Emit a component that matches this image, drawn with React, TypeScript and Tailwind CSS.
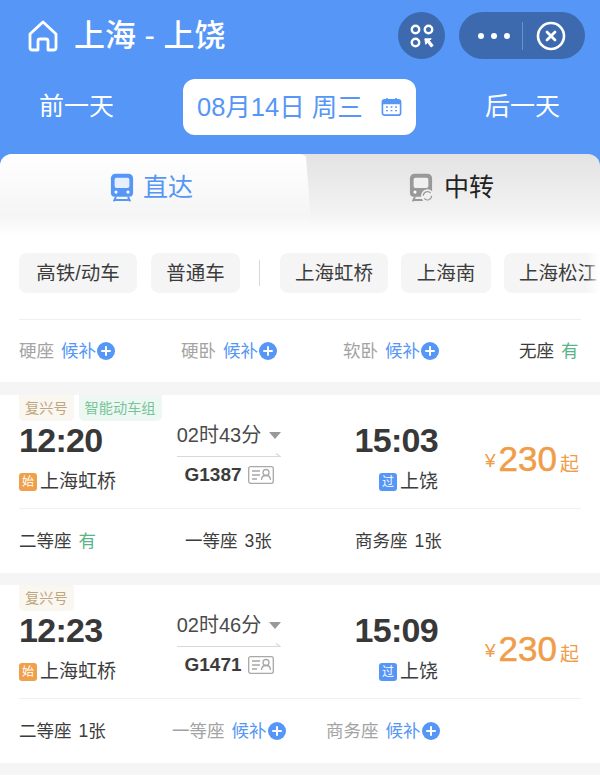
function Plus() {
  return (
    <svg width="18" height="18" viewBox="0 0 18 18" className="shrink-0 ml-px">
      <circle cx="9" cy="9" r="9" fill="#5596f6" />
      <path d="M9 5v8M5 9h8" stroke="#fff" strokeWidth="2" strokeLinecap="round" />
    </svg>
  )
}

function TrainIcon({ color, transfer }: { color: string; transfer?: boolean }) {
  return (
    <svg width="24" height="31" viewBox="0 0 26 32">
      <path d="M6 1h14a5 5 0 015 5v16a4 4 0 01-4 4H5a4 4 0 01-4-4V6a5 5 0 015-5z" fill={color} />
      <path d="M7 5.500h12a2 2 0 012 2v7a2 2 0 01-2 2H7a2 2 0 01-2-2v-7a2 2 0 012-2z" fill="#fff" opacity="0.85" />
      <circle cx="6.500" cy="21" r="1.700" fill="#fff" />
      <circle cx="19.500" cy="21" r="1.700" fill="#fff" />
      <path d="M6.500 26l-2.500 5M19.500 26l2.500 5M5 29.500h16" stroke={color} strokeWidth="2" fill="none" />
      {transfer && (
        <>
          <circle cx="20" cy="25" r="7" fill="#f0f0f0" />
          <path d="M15.500 25a4.500 4.500 0 018-2.800M24.500 25a4.500 4.500 0 01-8 2.800" stroke="#999" strokeWidth="1.300" fill="none" />
        </>
      )}
    </svg>
  )
}

function Seat({ name, value, kind, className = '' }: { name: string; value: string; kind: 'wait' | 'have' | 'count'; className?: string }) {
  if (kind === 'wait') {
    return (
      <div className={`flex items-center ${className}`}>
        <span className="text-[#a3a3a3]">{name}</span>
        <span className="ml-[7px] text-[#5596f6]">{value}</span>
        <Plus />
      </div>
    )
  }
  return (
    <div className={`flex items-center ${className}`}>
      <span className="text-[#3c3c3c]">{name}</span>
      <span className={`ml-[7px] ${kind === 'have' ? 'text-[#5ab387]' : 'text-[#3c3c3c]'}`}>{value}</span>
    </div>
  )
}

function IdCard() {
  return (
    <svg width="26" height="18" viewBox="0 0 26 18" fill="none" stroke="#a8a8a8">
      <rect x="0.700" y="0.700" width="24.600" height="16.600" rx="2" strokeWidth="1.300" />
      <path d="M4 5h8M4 9h8M4 13h5" strokeWidth="1.300" />
      <circle cx="18" cy="6.500" r="3" strokeWidth="1.300" />
      <path d="M13.500 14c0-6 9-6 9 0" strokeWidth="1.300" />
    </svg>
  )
}

type Train = {
  tags: string[]
  dep: string
  arr: string
  dur: string
  no: string
  seats: React.ReactNode
}

function TrainCard({ t }: { t: Train }) {
  return (
    <div className="bg-white h-[178px] px-[19px] flex flex-col">
      <div className="flex gap-[5px] h-[26px]">
        {t.tags.map((tag, i) => (
          <span
            key={tag}
            className={`h-[26px] px-[6px] rounded-b-[5px] text-[14.200px] leading-[26px] ${i === 0 ? 'bg-[#faf6f0] text-[#bfa67e]' : 'bg-[#eef8f2] text-[#78c49a]'}`}
          >
            {tag}
          </span>
        ))}
      </div>
      <div className="flex h-[88px] border-b border-[#f0f0f0]">
        <div className="w-[131px] shrink-0">
          <div className="text-[34px] leading-[38px] font-bold text-[#383838] tracking-[-0.7px]">{t.dep}</div>
          <div className="mt-[10px] flex items-center gap-[3px] text-[19px] leading-[26px] text-[#3c3c3c]">
            <span className="w-[18px] h-[18px] rounded-[3px] bg-[#f0a04b] text-white text-[12px] leading-[18px] text-center">始</span>
            上海虹桥
          </div>
        </div>
        <div className="w-[104px] shrink-0 ml-[27px] flex flex-col items-center">
          <div className="flex items-center gap-[8px] text-[20px] leading-[24px] text-[#4a4a4a] mt-[2px] whitespace-nowrap">
            {t.dur}
            <span className="w-0 h-0 border-x-[6px] border-x-transparent border-t-[7px] border-t-[#999]" />
          </div>
          <svg width="104" height="5" viewBox="0 0 104 5" className="mt-[6px]">
            <path d="M0 3.500h103l-4-3" stroke="#d8d8d8" strokeWidth="1.200" fill="none" />
          </svg>
          <div className="mt-[5px] flex items-center gap-[6px] text-[19px] leading-[24px] font-bold text-[#3c3c3c] whitespace-nowrap">
            {t.no}
            <IdCard />
          </div>
        </div>
        <div className="w-[157px] shrink-0 flex flex-col items-end">
          <div className="text-[34px] leading-[38px] font-bold text-[#383838] tracking-[-0.7px]">{t.arr}</div>
          <div className="mt-[10px] flex items-center gap-[3px] text-[19px] leading-[26px] text-[#3c3c3c]">
            <span className="w-[18px] h-[18px] rounded-[3px] bg-[#5596f6] text-white text-[12px] leading-[18px] text-center">过</span>
            上饶
          </div>
        </div>
        <div className="flex-1 flex items-start justify-end text-[#f09c48] mt-[18px] pr-[2px]">
          <span className="text-[19px] leading-[30px] mt-[7px] mr-[3px]">¥</span>
          <span className="text-[35px] leading-[40px] font-normal [-webkit-text-stroke:0.5px_#f09c48]">230</span>
          <span className="text-[19px] leading-[24px] ml-[3px] mt-[14px]">起</span>
        </div>
      </div>
      <div className="flex-1 text-[17.500px] flex items-center">{t.seats}</div>
    </div>
  )
}

const trains: Train[] = [
  {
    tags: ['复兴号', '智能动车组'],
    dep: '12:20',
    arr: '15:03',
    dur: '02时43分',
    no: 'G1387',
    seats: (
      <div className="w-full flex">
        <Seat name="二等座" value="有" kind="have" className="w-[166px]" />
        <Seat name="一等座" value="3张" kind="count" className="w-[170px]" />
        <Seat name="商务座" value="1张" kind="count" />
      </div>
    ),
  },
  {
    tags: ['复兴号'],
    dep: '12:23',
    arr: '15:09',
    dur: '02时46分',
    no: 'G1471',
    seats: (
      <div className="w-full flex">
        <Seat name="二等座" value="1张" kind="count" className="w-[153px]" />
        <Seat name="一等座" value="候补" kind="wait" className="w-[154px]" />
        <Seat name="商务座" value="候补" kind="wait" />
      </div>
    ),
  },
]

export default function App() {
  return (
    <div className="w-[600px] h-[783px] overflow-hidden bg-white font-['Liberation_Sans','Noto_Sans_CJK_SC',sans-serif]">
      <div className="h-[154px] bg-[#5596f6] text-white">
        <div className="h-[79px] pl-[28px] pr-[15px] pt-[12px] flex items-start">
          <svg width="30" height="32" viewBox="0 0 30 32" fill="none" stroke="#fff" strokeWidth="2.800" strokeLinejoin="round" className="mt-[8px]">
            <path d="M2 14L15 2l13 12v13.500a2.500 2.500 0 01-2.500 2.500H20v-9a2 2 0 00-2-2h-6a2 2 0 00-2 2v9H4.500A2.500 2.500 0 012 27.500z" />
          </svg>
          <div className="ml-[16px] mt-[5px] text-[31px] leading-[38px] font-medium whitespace-nowrap">上海 - 上饶</div>
          <div className="ml-auto w-[47px] h-[47px] rounded-full bg-[#3d6aae] flex items-center justify-center">
            <svg width="26" height="26" viewBox="0 0 28 28" fill="none" stroke="#fff" strokeWidth="2.600">
              <circle cx="7" cy="7" r="4" />
              <circle cx="21" cy="7" r="4" />
              <circle cx="7" cy="21" r="4" />
              <path d="M17 17h7l-2 2 4 5-2 2-4-5-2 2z" fill="#fff" strokeWidth="1" />
            </svg>
          </div>
          <div className="ml-[14px] w-[126px] h-[47px] rounded-full bg-[#3d6aae] flex items-center">
            <div className="w-[51px] flex justify-end gap-[7px]">
              <span className="w-[6px] h-[6px] rounded-full bg-white" />
              <span className="w-[6px] h-[6px] rounded-full bg-white" />
              <span className="w-[6px] h-[6px] rounded-full bg-white" />
            </div>
            <div className="ml-[12px] w-px h-[28px] bg-[#6d92c9]" />
            <svg width="30" height="30" viewBox="0 0 30 30" fill="none" stroke="#fff" className="ml-[13px]">
              <circle cx="15" cy="15" r="13" strokeWidth="2.600" />
              <path d="M11 11l8 8M19 11l-8 8" strokeWidth="2.800" strokeLinecap="round" />
            </svg>
          </div>
        </div>
        <div className="flex items-center h-[56px] text-[25px]">
          <div className="w-[183px] pl-[39px]">前一天</div>
          <div className="w-[233px] h-[56px] rounded-[12px] bg-white text-[#5596f6] flex items-center pl-[14px] text-[25.500px] whitespace-nowrap">
            <span className="whitespace-pre">08月14日 周三</span>
            <svg width="21" height="20" viewBox="0 0 22 22" className="ml-[18px]">
              <rect x="1" y="3" width="20" height="17" rx="2.500" fill="none" stroke="#5596f6" strokeWidth="1.800" />
              <path d="M1 5.500a2.500 2.500 0 012.500-2.500h15A2.500 2.500 0 0121 5.500V8H1z" fill="#5596f6" />
              <path d="M6 1v4M16 1v4" stroke="#5596f6" strokeWidth="1.800" />
              <path d="M5 11h2M10 11h2M15 11h2M5 15h2M10 15h2M15 15h2" stroke="#5596f6" strokeWidth="1.600" />
            </svg>
          </div>
          <div className="ml-[69px]">后一天</div>
        </div>
      </div>

      <div className="h-[81px] bg-[#5596f6]">
        <div className="h-full flex rounded-t-[12px] overflow-hidden bg-gradient-to-b from-[#e3e3e3] via-[#f3f3f3] via-75% to-white">
          <div className="w-[312px] rounded-tr-[14px] [clip-path:polygon(0_0,98%_0,100%_100%,0_100%)] bg-gradient-to-b from-white via-[#f5f5f5] via-75% to-white flex items-start pl-[110px] pt-[18px] gap-[9px] text-[#5596f6] text-[25px] leading-[30px]">
            <TrainIcon color="#5596f6" />
            直达
          </div>
          <div className="flex-1 flex items-start pl-[97px] pt-[18px] gap-[11px] text-[#222] text-[25px] leading-[30px]">
            <TrainIcon color="#999" transfer />
            中转
          </div>
        </div>
      </div>

      <div className="relative flex items-center h-[40px] mt-[18px] pl-[19px] text-[19.500px] text-[#3c3c3c] whitespace-nowrap">
        <span className="shrink-0 w-[118px] h-[40px] leading-[40px] text-center rounded-[8px] bg-[#f5f5f5]">高铁/动车</span>
        <span className="shrink-0 ml-[14px] w-[89px] h-[40px] leading-[40px] text-center rounded-[8px] bg-[#f5f5f5]">普通车</span>
        <span className="shrink-0 ml-[19px] w-px h-[26px] bg-[#d8d8d8]" />
        <span className="shrink-0 ml-[20px] w-[108px] h-[40px] leading-[40px] text-center rounded-[8px] bg-[#f5f5f5]">上海虹桥</span>
        <span className="shrink-0 ml-[13px] w-[90px] h-[40px] leading-[40px] text-center rounded-[8px] bg-[#f5f5f5]">上海南</span>
        <span className="shrink-0 ml-[13px] w-[108px] h-[40px] leading-[40px] text-center rounded-[8px] bg-[#f5f5f5]">上海松江</span>
        <span className="absolute right-0 top-0 w-[14px] h-[40px] bg-gradient-to-r from-transparent to-white" />
      </div>

      <div className="mx-[19px] mt-[26px] border-t border-[#f0f0f0] h-[63px] flex items-center text-[17.500px]">
        <Seat name="硬座" value="候补" kind="wait" className="w-[162px]" />
        <Seat name="硬卧" value="候补" kind="wait" className="w-[162px]" />
        <Seat name="软卧" value="候补" kind="wait" className="w-[176px]" />
        <Seat name="无座" value="有" kind="have" />
      </div>

      <div className="bg-[#f5f5f5] pt-[13px] pb-[12px] flex flex-col gap-[12px]">
        {trains.map(t => (
          <TrainCard key={t.no} t={t} />
        ))}
      </div>
    </div>
  )
}
